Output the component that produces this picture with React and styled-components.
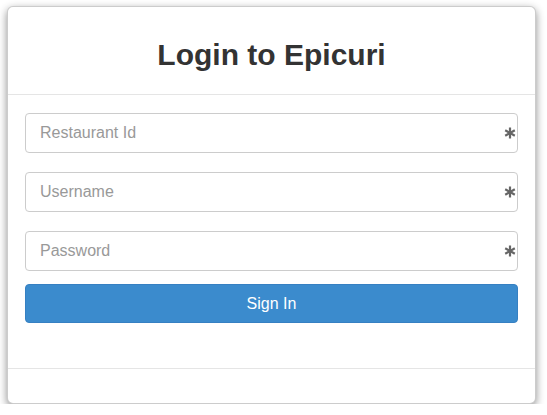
import React from 'react';
import styled, { createGlobalStyle } from 'styled-components';

const GlobalStyle = createGlobalStyle`
  * { box-sizing: border-box; }
  body {
    margin: 0;
    background: #fff;
    font-family: 'Liberation Sans', Arial, sans-serif;
  }
`;

const Page = styled.div`
  padding: 6px 0 0 7px;
`;

const Panel = styled.div`
  width: 529px;
  background: #fff;
  border: 1px solid rgba(0, 0, 0, 0.2);
  border-radius: 6px;
  box-shadow: 0 3px 8px rgba(0, 0, 0, 0.45);
`;

const Header = styled.div`
  height: 88px;
  border-bottom: 1px solid #e5e5e5;
  display: flex;
  align-items: center;
  justify-content: center;
`;

const Title = styled.h2`
  margin: 9px 0 0;
  font-size: 30px;
  font-weight: 700;
  color: #333;
`;

const Body = styled.form`
  padding: 18px 17px 45px;
  display: flex;
  flex-direction: column;
`;

const Field = styled.div`
  position: relative;
  margin-bottom: ${(p) => (p.last ? '13px' : '19px')};
`;

const Input = styled.input`
  display: block;
  width: 100%;
  height: 40px;
  padding: 0 30px 0 14px;
  font-family: 'Liberation Sans', Arial, sans-serif;
  font-size: 16px;
  color: #555;
  border: 1px solid #ccc;
  border-radius: 4px;
  outline: none;
  &::placeholder {
    color: #999;
  }
`;

const Required = styled.span`
  position: absolute;
  right: 2px;
  top: 14px;
  width: 12px;
  height: 12px;
  display: flex;
`;

const Button = styled.button`
  height: 39px;
  border: 1px solid #3680c2;
  border-radius: 4px;
  background: #3b8bcd;
  color: #fff;
  font-family: 'Liberation Sans', Arial, sans-serif;
  font-size: 16px;
  cursor: pointer;
`;

const Footer = styled.div`
  height: 35px;
  border-top: 1px solid #e5e5e5;
`;

const Asterisk = () => (
  <Required>
    <svg width="12" height="12" viewBox="0 0 12 12">
      <g stroke="#666" strokeWidth="2.2" strokeLinecap="butt">
        <line x1="6" y1="0.5" x2="6" y2="11.5" />
        <line x1="1.2" y1="3.2" x2="10.8" y2="8.8" />
        <line x1="1.2" y1="8.8" x2="10.8" y2="3.2" />
      </g>
    </svg>
  </Required>
);

const fields = [
  { name: 'restaurant', placeholder: 'Restaurant Id', type: 'text' },
  { name: 'username', placeholder: 'Username', type: 'text' },
  { name: 'password', placeholder: 'Password', type: 'password' },
];

const App = () => (
  <Page>
    <GlobalStyle />
    <Panel>
      <Header>
        <Title>Login to Epicuri</Title>
      </Header>
      <Body onSubmit={(e) => e.preventDefault()}>
        {fields.map((f, i) => (
          <Field key={f.name} last={i === fields.length - 1}>
            <Input type={f.type} name={f.name} placeholder={f.placeholder} />
            <Asterisk />
          </Field>
        ))}
        <Button type="submit">Sign In</Button>
      </Body>
      <Footer />
    </Panel>
  </Page>
);

export default App;
